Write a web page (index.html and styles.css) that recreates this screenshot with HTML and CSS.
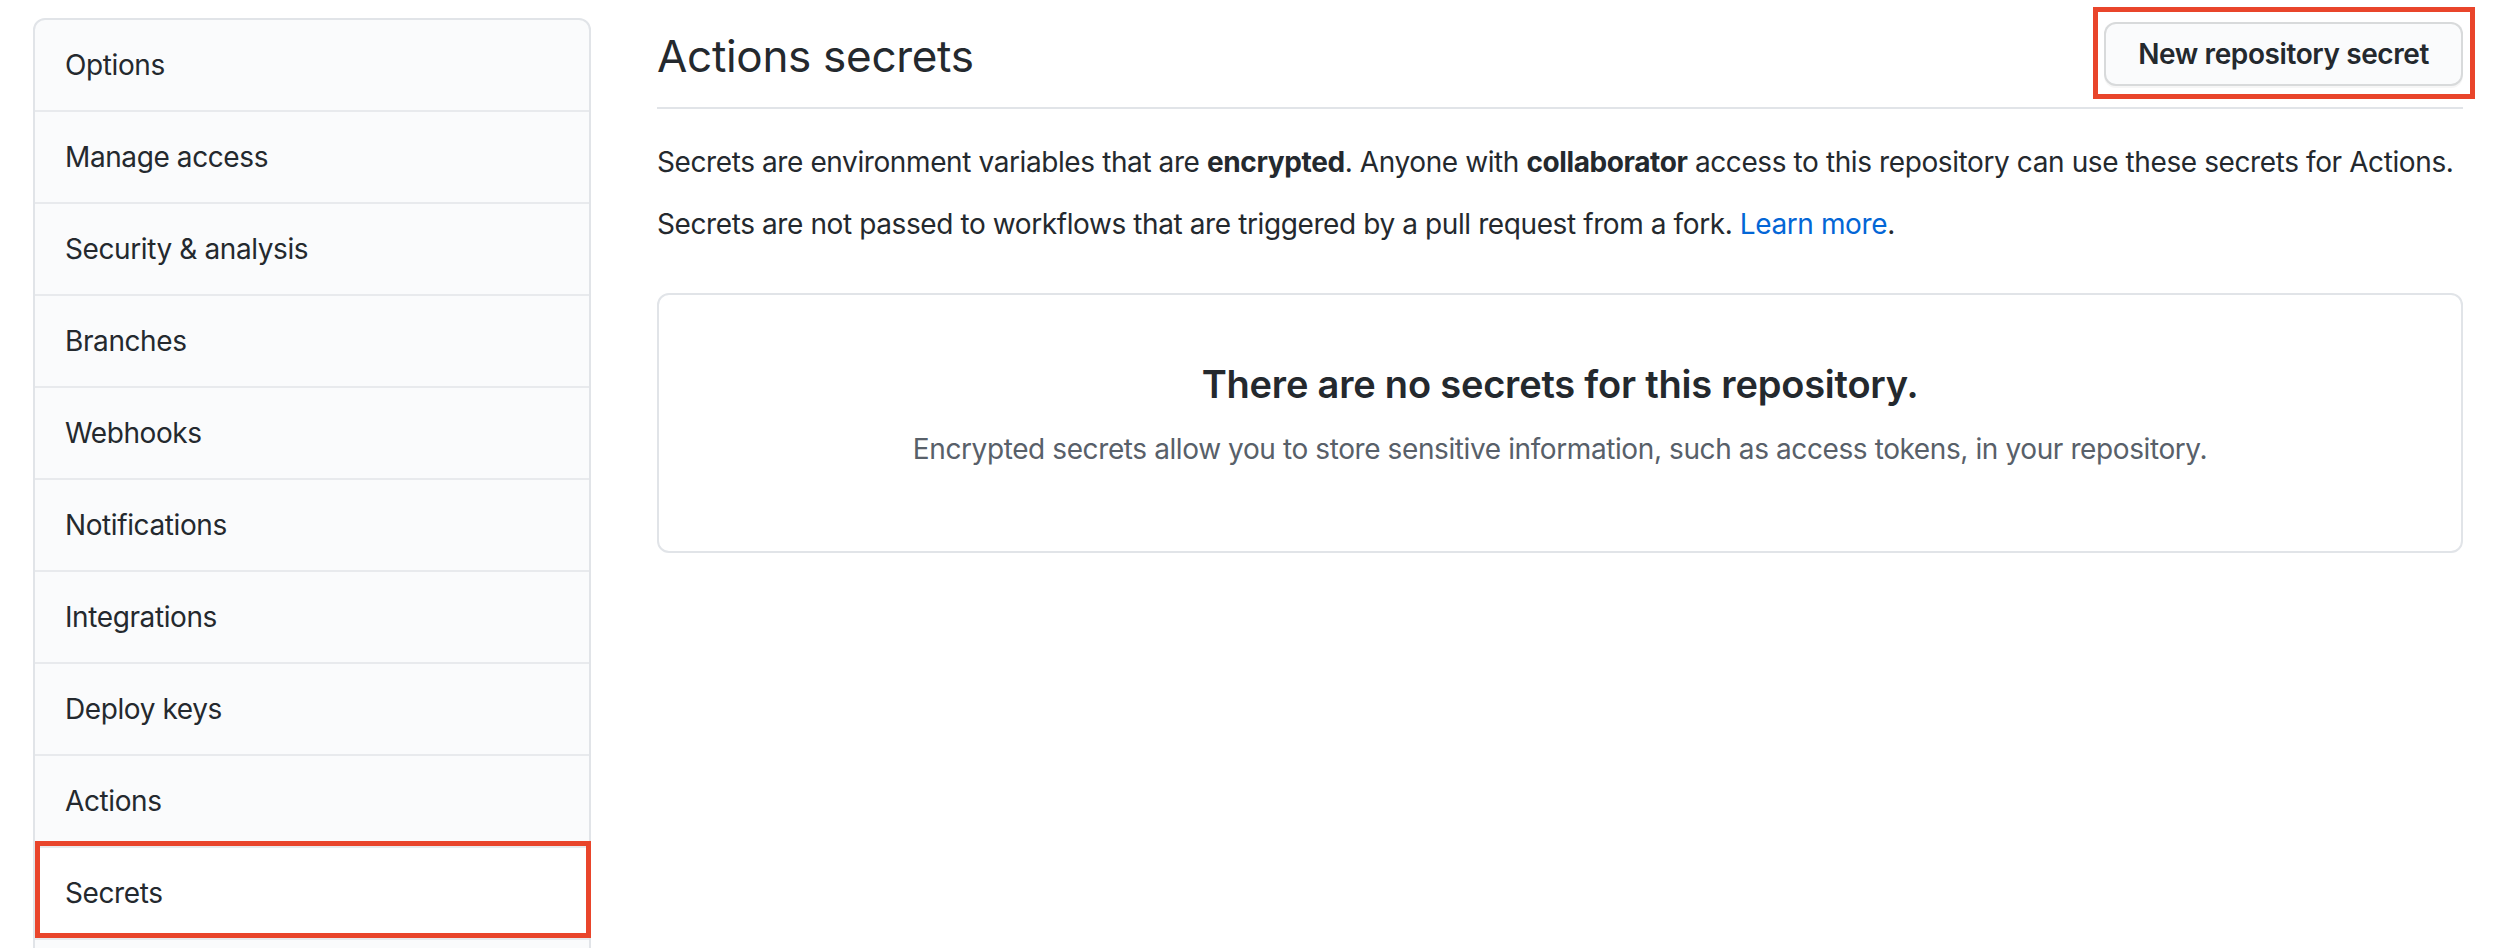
FILE: index.html
```html
<!DOCTYPE html>
<html lang="en">
<head>
<meta charset="utf-8">
<title>Actions secrets</title>
<link rel="stylesheet" href="styles.css">
</head>
<body>
<div class="page">
  <nav class="menu">
    <a class="menu-item first">Options</a>
    <a class="menu-item">Manage access</a>
    <a class="menu-item">Security &amp; analysis</a>
    <a class="menu-item">Branches</a>
    <a class="menu-item">Webhooks</a>
    <a class="menu-item">Notifications</a>
    <a class="menu-item">Integrations</a>
    <a class="menu-item">Deploy keys</a>
    <a class="menu-item">Actions</a>
    <a class="menu-item selected">Secrets</a>
    <a class="menu-item">&nbsp;</a>
  </nav>
  <main class="main">
    <div class="subhead">
      <h2 class="subhead-heading">Actions secrets</h2>
      <a class="btn">New repository secret</a>
    </div>
    <p class="lead">Secrets are environment variables that are <strong>encrypted</strong>. Anyone with <strong>collaborator</strong> access to this repository can use these secrets for Actions.</p>
    <p class="lead">Secrets are not passed to workflows that are triggered by a pull request from a fork. <a class="link">Learn more</a>.</p>
    <div class="blankslate">
      <h3 class="blank-title">There are no secrets for this repository.</h3>
      <p class="blank-text">Encrypted secrets allow you to store sensitive information, such as access tokens, in your repository.</p>
    </div>
  </main>
</div>
</body>
</html>
```

FILE: styles.css
```css
* { box-sizing: border-box; }
html, body { margin: 0; background: #fff; }
body {
  font-family: Inter, "Liberation Sans", sans-serif;
  color: #24292e;
  font-size: 28px;
  line-height: 42px;
  letter-spacing: -0.4px;
  overflow: hidden;
  height: 948px;
}
.page {
  display: flex;
  gap: 66px;
  padding: 18px 0 0 33px;
}
.menu {
  width: 558px;
  flex: none;
  display: flex;
  flex-direction: column;
  border: 2px solid #e1e4e8;
  border-radius: 12px;
  background: #fafbfc;
}
.menu-item {
  display: block;
  position: relative;
  padding: 24px 30px;
  border-bottom: 2px solid #e8eaed;
  font-size: 28px;
  line-height: 42px;
  color: #24292e;
}
.menu-item.first { border-radius: 10px 10px 0 0; }
.menu-item.selected { background: #fff; }
.menu-item.selected::after {
  content: "";
  position: absolute;
  left: 0;
  right: -2px;
  top: -7px;
  bottom: 0;
  border: 5px solid #e9452b;
}
.main {
  width: 1806px;
  flex: none;
}
.subhead {
  position: relative;
  display: flex;
  align-items: center;
  justify-content: space-between;
  padding: 4px 0 21px;
  border-bottom: 2px solid #e1e4e8;
}
.subhead-heading {
  margin: 4px 0 0;
  font-size: 44px;
  line-height: 60px;
  font-weight: 400;
  letter-spacing: -0.3px;
}
.btn {
  position: relative;
  display: inline-flex;
  align-items: center;
  height: 64px;
  padding: 0 32px;
  font-size: 28px;
  font-weight: 600;
  background: #fafbfc;
  border: 2px solid rgba(27, 31, 35, 0.15);
  border-radius: 12px;
  box-shadow: 0 2px 0 rgba(27, 31, 35, 0.04);
  color: #24292e;
}
.btn::after {
  content: "";
  position: absolute;
  left: -13px;
  right: -14px;
  top: -17px;
  bottom: -15px;
  border: 5px solid #e9452b;
}
.lead { margin: 0 0 20px; white-space: nowrap; }
.subhead + .lead { margin-top: 32px; }
.lead strong { font-weight: 700; }
.link { color: #0366d6; }
.blankslate {
  margin-top: 48px;
  border: 2px solid #e1e4e8;
  border-radius: 12px;
  padding: 64px 64px 61px;
  text-align: center;
}
.blank-title {
  margin: 0 0 19px;
  font-size: 38px;
  line-height: 50px;
  font-weight: 600;
  letter-spacing: -0.2px;
}
.blank-text {
  margin: 0 0 20px;
  color: #586069;
}
```
